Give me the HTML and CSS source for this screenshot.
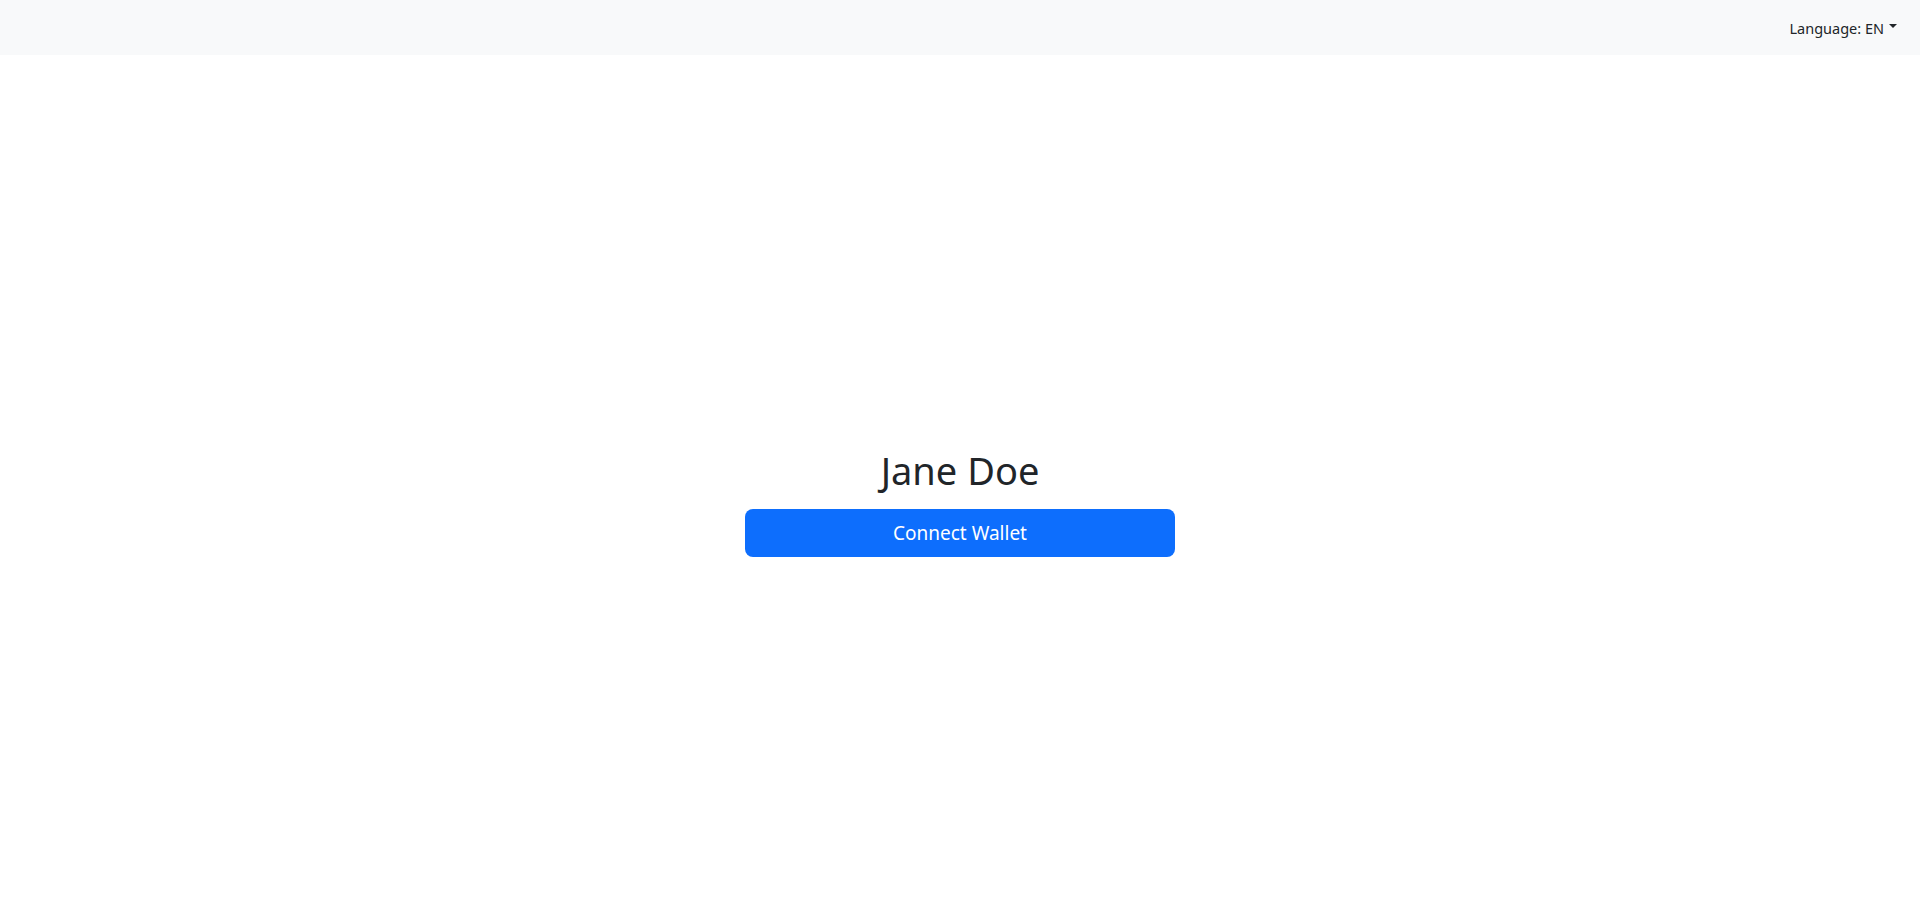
FILE: index.html
```html
<!DOCTYPE html>
<html lang="en">
<head>
<meta charset="utf-8">
<title>Jane Doe</title>
<link rel="stylesheet" href="styles.css">
</head>
<body>
<nav class="navbar">
  <div class="lang-toggle">Language: EN<span class="caret"></span></div>
</nav>
<main class="main">
  <div class="profile">
    <h1 class="name">Jane Doe</h1>
    <button class="btn-connect" type="button">Connect Wallet</button>
  </div>
</main>
</body>
</html>
```
FILE: styles.css
```css
* { box-sizing: border-box; }
html, body { margin: 0; padding: 0; }
body {
  font-family: "Noto Sans", "Open Sans", sans-serif;
  color: #212529;
  background: #fff;
}
.navbar {
  height: 55px;
  background: #f8f9fa;
  display: flex;
  align-items: center;
  justify-content: flex-end;
  padding: 0 23px 0 0;
}
.lang-toggle {
  font-size: 14.5px;
  color: #212529;
  display: flex;
  align-items: center;
}
.caret {
  display: inline-block;
  margin-left: 5px;
  width: 0;
  height: 0;
  border-left: 4px solid transparent;
  border-right: 4px solid transparent;
  border-top: 4px solid #212529;
  margin-top: -3px;
}
.main {
  height: 866px;
  display: flex;
  align-items: center;
  justify-content: center;
  padding-top: 26px;
}
.profile {
  width: 430px;
  display: flex;
  flex-direction: column;
  align-items: center;
}
.name {
  margin: 0 0 15px;
  font-size: 38px;
  font-weight: 400;
  line-height: 48px;
}
.btn-connect {
  width: 100%;
  height: 48px;
  background: #0d6efd;
  color: #fff;
  border: none;
  border-radius: 8px;
  font-family: inherit;
  font-size: 19px;
}
```
